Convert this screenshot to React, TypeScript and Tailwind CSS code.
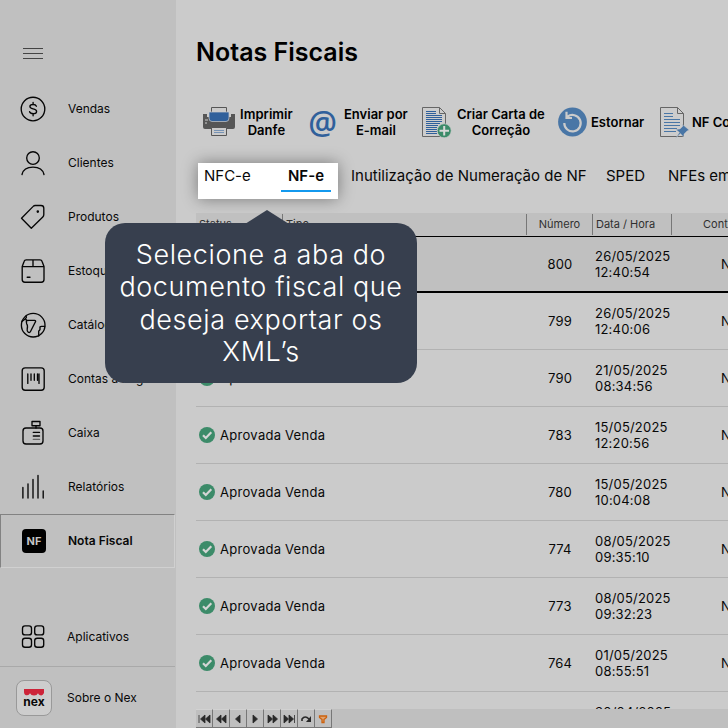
import type { ReactNode } from "react";

function Line({ children, size = 26 }: { children: ReactNode; size?: number }) {
  return (
    <svg width={size} height={size} viewBox="0 0 26 26" fill="none" stroke="#050505" strokeWidth="1.35" strokeLinecap="round" strokeLinejoin="round">
      {children}
    </svg>
  );
}

const MENU: { label: string; icon: ReactNode; spacing: string }[] = [
  {
    label: "Vendas",
    spacing: "tracking-[0px]",
    icon: (
      <Line>
        <circle cx="13" cy="13" r="11.8" />
        <path d="M16.4 10.2c-.5-1.2-1.6-1.7-3.3-1.7-2 0-3.2.8-3.2 2.1 0 3.2 6.7 1.3 6.7 4.8 0 1.4-1.4 2.2-3.4 2.2-1.900 0-3.200-.7-3.600-1.900M13.100 6.400v2M13.100 17.700v2" />
      </Line>
    ),
  },
  {
    label: "Clientes",
    spacing: "tracking-[0px]",
    icon: (
      <Line>
        <circle cx="13" cy="8" r="6.300" />
        <path d="M2 24.500c1-4.700 5.300-7.400 11-7.400s10 2.700 11 7.400" />
      </Line>
    ),
  },
  {
    label: "Produtos",
    spacing: "tracking-[0px]",
    icon: (
      <Line>
        <path d="M1.500 14.300 13.200 2.400Q14 1.500 15.200 1.500H21Q23.800 1.500 23.800 4.300V10.500Q23.800 12 22.800 13L11.300 24.300Z" />
        <circle cx="17.800" cy="7.600" r=".6" fill="#050505" />
      </Line>
    ),
  },
  {
    label: "Estoque",
    spacing: "tracking-[0px]",
    icon: (
      <Line>
        <path d="M2.200 8.500 4.200 3.200Q4.600 1.800 6.200 1.800H20Q21.600 1.800 22 3.200L24 8.500V21.500Q24 24.200 21.300 24.200H4.900Q2.200 24.200 2.200 21.500ZM2.500 8.600H23.800M13 2V8.400M7.200 19.200H10" />
      </Line>
    ),
  },
  {
    label: "Catálogo",
    spacing: "tracking-[0px]",
    icon: (
      <Line>
        <circle cx="13.200" cy="13.200" r="11.800" />
        <path d="M2 9.300Q8 5.700 5.800 4.100M5.800 7.200Q6.300 8.900 8.800 8.400H14.500Q16.300 8.600 15.200 10.300L10.500 19.500Q9.800 21 8.200 20.200 6.800 19.400 7.200 17.200 8 13.300 6.700 11.900 6.200 9.700 6.400 8M24.800 14.300H21.500Q19.600 14.300 20 16.200V17.600Q19.700 18.400 18.700 19V24" />
      </Line>
    ),
  },
  {
    label: "Contas a Pagar",
    spacing: "tracking-[0px]",
    icon: (
      <Line>
        <rect x="2.200" y="1.800" width="22" height="22.400" rx="3" />
        <path d="M7.800 8V17.400M11 8V14.200M14.300 8V14.200M17.500 8V14.200M19 8V17.400" />
      </Line>
    ),
  },
  {
    label: "Caixa",
    spacing: "tracking-[0px]",
    icon: (
      <Line>
        <rect x="3" y="8" width="20" height="16" rx="3" />
        <path d="M12 1.500H20V5.700H12ZM16 5.800V8M13.300 12.400H19.500M13.300 16H19.500" />
        <path d="M13.300 19.400H19.500" stroke="#666" />
      </Line>
    ),
  },
  {
    label: "Relatórios",
    spacing: "tracking-[0px]",
    icon: (
      <Line>
        <path d="M2.900 13.500V24M8 9.800V24M13 5.500V24M18 1.500V24M23.200 17V24" />
      </Line>
    ),
  },
];

const ROWS = [
  ["800", "26/05/2025", "12:40:54"],
  ["799", "26/05/2025", "12:40:06"],
  ["790", "21/05/2025", "08:34:56"],
  ["783", "15/05/2025", "12:20:56"],
  ["780", "15/05/2025", "10:04:08"],
  ["774", "08/05/2025", "09:35:10"],
  ["773", "08/05/2025", "09:32:23"],
  ["764", "01/05/2025", "08:55:51"],
  ["763", "30/04/2025", "17:20:11"],
];

function Sidebar() {
  return (
    <aside className="flex h-full w-[176px] shrink-0 flex-col bg-[#c0c0c0] text-[12px] text-[#080808]">
      <div className="flex h-[82px] shrink-0 flex-col gap-[4px] pt-[48px] pl-[23px]">
        <i className="h-px w-5 bg-[#444]" />
        <i className="h-px w-5 bg-[#444]" />
        <i className="h-px w-5 bg-[#444]" />
      </div>
      {MENU.map((m) => (
        <div key={m.label} className="flex h-[54px] shrink-0 items-center pl-5">
          <span className="w-12">{m.icon}</span>
          <span className={`whitespace-nowrap ${m.spacing}`}>{m.label}</span>
        </div>
      ))}
      <div className="mr-px flex h-[54px] shrink-0 items-center border border-t-[#828282] border-r-[#d0d0d0] border-b-[#d0d0d0] border-l-[#828282] pl-[21px]">
        <span className="mr-[22px] flex h-6 w-6 items-center justify-center rounded-[4px] bg-black text-[11px] font-bold text-[#c4c4c4]">NF</span>
        <b className="font-semibold">Nota Fiscal</b>
      </div>
      <div className="mt-[39px] flex h-[59px] shrink-0 items-center pl-5">
        <span className="w-[47px]">
          <Line>
            <rect x="2.500" y="1.900" width="9" height="9" rx="2.500" />
            <rect x="14.700" y="1.900" width="9" height="9" rx="2.500" />
            <rect x="2.500" y="14.200" width="9" height="9" rx="2.500" />
            <rect x="14.700" y="14.200" width="9" height="9" rx="2.500" />
          </Line>
        </span>
        <span>Aplicativos</span>
      </div>
      <div className="mr-px flex h-[62px] items-center border-t border-[#a9a9a9] pl-4">
        <span className="mr-[15px] flex h-9 w-9 flex-col items-center rounded-[8px] border border-[#999] bg-[#cdcdcd] pt-[8px]">
          <svg width="20" height="7" viewBox="0 0 20 7">
            <path d="M0 0H20V4Q18.500 7.500 15.500 6 14.500 5.500 14 4.300 13 6.500 10 6.500T6 4.300Q5 6.500 2.500 6.200 0 6 0 3Z" fill="#cd2439" />
          </svg>
          <b className="-mt-px text-[12px] leading-[13px]">nex</b>
        </span>
        <span>Sobre o Nex</span>
      </div>
    </aside>
  );
}

function PrinterIcon() {
  return (
    <svg width="32" height="32" viewBox="0 0 32 32">
      <path d="M0 8H4V11H28V8H32V21Q32 23 30 23H2Q0 23 0 21Z" fill="#565656" />
      <path d="M2 14H5M2 17H4" stroke="#cbcbcb" strokeWidth="1" />
      <path d="M8.500 6V1.500H23.500V6" fill="#cbcbcb" stroke="#565656" />
      <path d="M6 6H26V12Q26 15.500 23 15.500H9Q6 15.500 6 12Z" fill="#30609b" stroke="#cbcbcb" strokeWidth=".7" />
      <path d="M8.500 21.500H23.500V29.500H8.500Z" fill="#cbcbcb" stroke="#565656" />
      <path d="M11 24.500H21M11 26.500H21" stroke="#7793b5" />
    </svg>
  );
}

function SheetIcon({ pin = false }: { pin?: boolean }) {
  const ink = pin ? "#4976a6" : "#30609b";
  return (
    <svg width="30" height="33" viewBox="0 0 30 33">
      <path d="M.5 1.500H17.500L23.500 7.500V30.500H.5Z" fill="#cdcdcd" stroke="#666" />
      <path d="M17.500 1.500V7.500H23.500" fill="none" stroke="#666" />
      {pin ? (
        <>
          <path d="M4 7.500H13M4 10.500H13M4 13.500H20M4 16.500H20M4 19.500H20M4 22.500H17M4 25.500H16" stroke={ink} />
          <path d="m22 18 7 6-2 1-3 3-.5 3-3-3.500-5 5 4-6-3.500-3 4-.5 3-3Z" fill={ink} stroke="#cbcbcb" strokeWidth=".4" />
        </>
      ) : (
        <>
          <path d="M4 5.500H14M4 7.500H14M4 9.500H20M4 11.500H20M4 13.500H20M4 15.500H20M4 17.500H18M4 19.500H16M4 21.500H15M4 23.500H15M4 25.500H15M4 27.500H15" stroke={ink} />
          <circle cx="22.200" cy="24.800" r="7" fill="#3c8b69" stroke="#cbcbcb" strokeWidth=".7" />
          <path d="M17.500 24.800H27M22.200 20V29.500" stroke="#d9d9d9" strokeWidth="2" />
        </>
      )}
    </svg>
  );
}

function Toolbar() {
  return (
    <div className="flex h-[57px] shrink-0 pl-[7px] text-center text-[13px] leading-[16px] font-semibold whitespace-nowrap text-black">
      <div className="flex h-8 w-[105px] shrink-0 items-center gap-[5px]">
        <PrinterIcon />
        <span className="tracking-[0.05px]">Imprimir<br />Danfe</span>
      </div>
      <div className="flex h-8 w-[114px] shrink-0 items-center gap-[7px]">
        <span className="flex h-8 w-[29px] shrink-0 items-center justify-center font-['Open_Sans',sans-serif] text-[32px] leading-[26px] font-semibold text-[#30609b]">@</span>
        <span>Enviar por<br />E-mail</span>
      </div>
      <div className="flex h-8 w-[136px] shrink-0 items-center gap-[5px]">
        <SheetIcon />
        <span>Criar Carta de<br />Correção</span>
      </div>
      <div className="flex h-8 w-[102px] shrink-0 items-center gap-[4px]">
        <svg width="29" height="30" viewBox="0 0 29 30">
          <circle cx="14.500" cy="15" r="14.400" fill="#4976a6" />
          <path d="M9.500 9.700A8.200 8.200 0 1 1 6.300 16M8.500 4.800V11H14" fill="none" stroke="#cbcbcb" strokeWidth="2.200" />
        </svg>
        <span>Estornar</span>
      </div>
      <div className="flex h-8 shrink-0 items-center gap-[2px]">
        <SheetIcon pin />
        <span>NF Complementar</span>
      </div>
    </div>
  );
}

function Tabs() {
  return (
    <div className="flex h-[50px] shrink-0 text-[15px] leading-[18px] whitespace-nowrap text-[#080808]">
      <div className="ml-[2px] flex h-9 w-[140px] shrink-0 bg-white pt-[4px] pl-[6px] shadow-[0_0_16px_rgba(0,0,0,0.4)]">
        <span className="w-[77px]">NFC-e</span>
        <span className="h-[25px] w-[50px] border-b-2 border-[#1399ee] text-center font-semibold">NF-e</span>
      </div>
      <span className="ml-[13px] w-[255px] shrink-0 pt-[4px]">Inutilização de Numeração de NF</span>
      <span className="w-[62px] shrink-0 pt-[4px]">SPED</span>
      <span className="pt-[4px]">NFEs emitidas</span>
    </div>
  );
}

function Table() {
  return (
    <div className="flex h-[496px] w-[720px] shrink-0 flex-col overflow-hidden">
      <div className="flex h-[23px] shrink-0 items-center bg-[#c0c0c0] text-[11px] text-[#303030]">
        <span className="w-[87px] border-r border-[#777] pl-[3px] leading-[21px]">Status</span>
        <span className="w-[244px] border-r border-[#777] pl-[3px] leading-[21px]">Tipo</span>
        <span className="w-[66px] border-r border-[#777] text-center leading-[21px]">Número</span>
        <span className="w-[79px] border-r border-[#777] pl-[3px] leading-[21px]">Data / Hora</span>
        <span className="pl-[31px]">Contingência</span>
      </div>
      {ROWS.map(([n, d, h], i) => (
        <div
          key={n}
          className={
            i === 0
              ? "flex h-[57px] shrink-0 items-center border-t border-b-2 border-t-black border-b-black bg-[#c0c0c0] text-[13px] leading-[16px] text-[#080808]"
              : "flex h-[57px] shrink-0 items-center border-b border-[#b2b2b2] text-[13px] leading-[16px] text-[#080808]"
          }
        >
          <svg width="16" height="16" viewBox="0 0 16 16" className="mr-[5px] ml-[3px] shrink-0">
            <circle cx="8" cy="8" r="8" fill="#3c8b69" />
            <path d="m4 8.200 2.800 2.800L12.300 5.300" fill="none" stroke="#d5d5d5" strokeWidth="2.200" />
          </svg>
          <span className="w-[65px] tracking-[0.3px]">Aprovada</span>
          <span className="w-[242px] tracking-[0.3px]">Venda</span>
          <span className="w-[65px] pl-px text-center tracking-[0.2px]">{n}</span>
          <span className="w-[129px] pl-[3px] tracking-[0.2px]">{d}<br />{h}</span>
          <span>Não</span>
        </div>
      ))}
    </div>
  );
}

const NAV = [
  "M2 3V11M8 3 3.500 7 8 11ZM13 3 8.500 7 13 11Z",
  "M7 3 2.500 7 7 11ZM12 3 7.500 7 12 11Z",
  "M9 3 4.500 7 9 11Z",
  "M5 3 9.500 7 5 11Z",
  "M3 3 7.500 7 3 11ZM8 3 12.500 7 8 11Z",
  "M2 3 6.500 7 2 11ZM7 3 11.500 7 7 11ZM12.500 3V11",
];

function Navigator() {
  return (
    <div className="flex h-[19px] bg-[#bfbfbf]">
      {NAV.map((d) => (
        <span key={d} className="flex w-[17px] items-center justify-center border-r border-b border-t border-t-[#d2d2d2] border-r-[#777] border-b-[#777]">
          <svg width="14" height="14" viewBox="0 0 14 14">
            <path d={d} fill="#292929" stroke="#292929" strokeWidth=".8" />
          </svg>
        </span>
      ))}
      <span className="flex w-[17px] items-center justify-center border-t border-r border-b border-t-[#d2d2d2] border-r-[#777] border-b-[#777]">
        <svg width="14" height="14" viewBox="0 0 14 14">
          <path d="M3 9V7Q6 3 10 7" fill="none" stroke="#292929" strokeWidth="1.600" />
          <path d="M12 4V10H7Z" fill="#292929" />
        </svg>
      </span>
      <span className="flex w-[17px] items-center justify-center border-t border-r border-b border-t-[#d2d2d2] border-r-[#777] border-b-[#777]">
        <svg width="14" height="14" viewBox="0 0 14 14">
          <path d="M3.500 4H10.500V5.500L8 7.500V10.500H6V7.500L3.500 5.500Z" fill="#dfa16e" stroke="#cc610d" strokeWidth="1.300" />
        </svg>
      </span>
    </div>
  );
}

function Callout() {
  return (
    <div className="absolute top-[210px] left-[105px] flex w-[312px] flex-col items-center">
      <svg width="44" height="14" viewBox="0 0 44 14" className="relative left-[6px] -mb-px">
        <path d="M0 14 22 0 44 14Z" fill="#373f4e" />
      </svg>
      <div className="h-[160px] w-full rounded-[20px] bg-[#373f4e] pt-[16px] text-center text-[27px] leading-[32.300px] font-light tracking-[0.600px] whitespace-nowrap text-white">
        Selecione a aba do<br />documento fiscal que<br />deseja exportar os<br />XML’s
      </div>
    </div>
  );
}

export default function App() {
  return (
    <div className="relative flex h-[728px] w-[728px] overflow-hidden bg-[#cbcbcb] font-[Inter,'Liberation_Sans',sans-serif]">
      <Sidebar />
      <main className="flex min-w-0 flex-1 flex-col overflow-hidden pl-5">
        <h1 className="h-[106px] shrink-0 pt-[37px] text-[25px] leading-[31px] font-semibold text-black">Notas Fiscais</h1>
        <Toolbar />
        <Tabs />
        <Table />
        <Navigator />
      </main>
      <Callout />
    </div>
  );
}
